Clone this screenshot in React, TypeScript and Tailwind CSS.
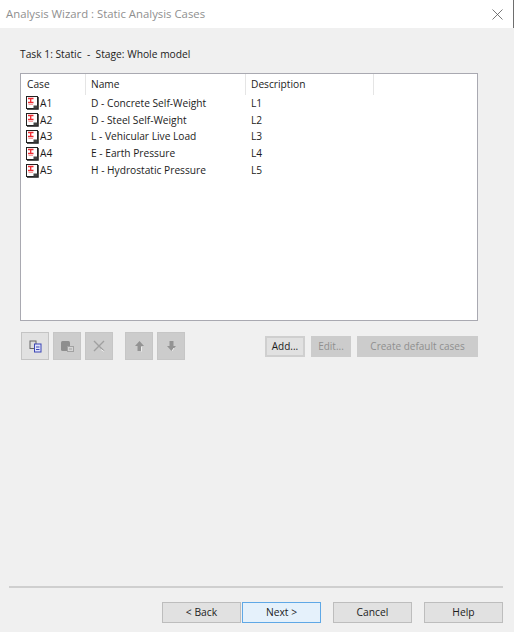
const font = { fontFamily: '"Open Sans", "Noto Sans", sans-serif' };

function CaseIcon() {
  return (
    <svg width="13" height="14" viewBox="0 0 13 14" className="shrink-0">
      <rect x="0.5" y="0.5" width="11" height="12" fill="#fff" stroke="#222" />
      <path d="M12.5 1V13.5H1" fill="none" stroke="#555" />
      <path d="M2 2.5H7.5M4.7 2.5V6.5M2 6.5H7.5" stroke="#ee2b32" strokeWidth="1.3" fill="none" />
      <path d="M2.5 8.5H7" stroke="#f4a0a0" strokeWidth="1" fill="none" />
      <rect x="7.5" y="9.5" width="4" height="3" fill="#444" />
    </svg>
  );
}

function ToolButton({ active, children }: { active?: boolean; children: React.ReactNode }) {
  return (
    <div
      className={
        active
          ? "w-7 h-7 flex items-center justify-center bg-[#e1e1e1] border border-[#c4c4c4]"
          : "w-7 h-7 flex items-center justify-center bg-[#cccccc] border border-[#c6c6c6]"
      }
    >
      {children}
    </div>
  );
}

function SmallButton({ w, active, children }: { w: string; active?: boolean; children: string }) {
  return (
    <div
      className={`${w} h-[21px] flex items-center justify-center text-[10px] ${
        active ? "bg-[#e1e1e1] border-2 border-[#cfcfcf] text-[#1c1c1c]" : "bg-[#cccccc] text-[#8f8f8f]"
      }`}
    >
      {children}
    </div>
  );
}

function WizardButton({ active, children }: { active?: boolean; children: string }) {
  return (
    <div
      className={
        active
          ? "w-[79px] h-[21px] flex items-center justify-center text-[10.3px] text-[#1c1c1c] bg-[#e5f1fb] border border-[#5fa8e6]"
          : "w-[79px] h-[21px] flex items-center justify-center text-[10.3px] text-[#1c1c1c] bg-[#e1e1e1] border border-[#bdbdbd]"
      }
    >
      {children}
    </div>
  );
}

const rows = [
  ["A1", "D - Concrete Self-Weight", "L1"],
  ["A2", "D - Steel Self-Weight", "L2"],
  ["A3", "L - Vehicular Live Load", "L3"],
  ["A4", "E - Earth Pressure", "L4"],
  ["A5", "H - Hydrostatic Pressure", "L5"],
];

export default function App() {
  return (
    <div style={font} className="w-[514px] h-[632px] flex flex-col bg-[#f0f0f0] text-[#1c1c1c] overflow-hidden">
      <div className="h-7 shrink-0 bg-white border-r border-[#6e6e6e] flex items-center justify-between pl-[6px] pr-[10px]">
        <span className="text-[11.35px] text-[#8f8f8f]">Analysis Wizard : Static Analysis Cases</span>
        <svg width="11" height="11" viewBox="0 0 11 11">
          <path d="M0.5 0.5L10.5 10.5M10.5 0.5L0.5 10.5" stroke="#555" strokeWidth="0.8" fill="none" />
        </svg>
      </div>

      <div className="flex-1 flex flex-col pl-5 pr-9">
        <div className="h-[16px] mt-[19px] flex items-center text-[10.25px] whitespace-pre">Task 1: Static  -  Stage: Whole model</div>

        <div className="h-[248px] mt-[10px] bg-white border border-[#a9a9b1] text-[10.2px]">
          <div className="h-[21px] flex items-center">
            <div className="w-[65px] h-full pl-[6px] flex items-center border-r border-[#e5e5e5]">Case</div>
            <div className="w-[160px] h-full pl-[5px] flex items-center border-r border-[#e5e5e5]">Name</div>
            <div className="w-[128px] h-full pl-[5px] flex items-center border-r border-[#e5e5e5]">Description</div>
          </div>
          <div className="flex flex-col">
            {rows.map(([c, n, d]) => (
              <div key={c} className="h-[16.8px] flex items-center">
                <div className="w-[65px] pl-[5px] flex items-center gap-[1px]">
                  <CaseIcon />
                  <span>{c}</span>
                </div>
                <div className="w-[160px] pl-[5px]">{n}</div>
                <div className="pl-[5px]">{d}</div>
              </div>
            ))}
          </div>
        </div>

        <div className="mt-[11px] pl-px flex items-center">
          <div className="flex items-center gap-[4px]">
            <ToolButton active>
              <svg width="13" height="13" viewBox="0 0 13 13">
                <rect x="1" y="1" width="6" height="7.5" fill="#dcdcdc" stroke="#666" />
                <rect x="5.5" y="4" width="6.5" height="8" fill="#dfe3fa" stroke="#3b45b5" />
                <path d="M7 7H10.5M7 9.5H10.5" stroke="#3b45b5" />
              </svg>
            </ToolButton>
            <ToolButton>
              <svg width="14" height="13" viewBox="0 0 14 13">
                <rect x="1" y="1" width="9" height="10" rx="1.5" fill="#8e8e8e" />
                <rect x="7.5" y="6.5" width="6" height="5" fill="#d4d4d4" stroke="#a2a2a2" />
                <path d="M9 9H12" stroke="#a2a2a2" />
              </svg>
            </ToolButton>
            <ToolButton>
              <svg width="12" height="12" viewBox="0 0 12 12">
                <path d="M1 1L11 11M11 1L1 11" stroke="#a0a0a0" strokeWidth="1.4" fill="none" />
                <path d="M8 9.5L11 11.5" stroke="#eeeeee" strokeWidth="1" fill="none" />
              </svg>
            </ToolButton>
          </div>
          <div className="ml-[12px] flex items-center gap-[4px]">
            <ToolButton>
              <svg width="11" height="12" viewBox="0 0 11 12">
                <path d="M5.5 1L10 6H7.5V11H3.5V6H1Z" fill="#939393" />
                <path d="M7.5 6.5V11.5" stroke="#ededed" fill="none" />
              </svg>
            </ToolButton>
            <ToolButton>
              <svg width="11" height="12" viewBox="0 0 11 12">
                <path d="M5.5 11L10 6H7.5V1H3.5V6H1Z" fill="#939393" />
                <path d="M8 8L6 11" stroke="#ededed" fill="none" />
              </svg>
            </ToolButton>
          </div>
          <div className="ml-auto flex items-center gap-[6px]">
            <SmallButton w="w-[40px]" active>Add...</SmallButton>
            <SmallButton w="w-[40px]">Edit...</SmallButton>
            <SmallButton w="w-[121px]">Create default cases</SmallButton>
          </div>
        </div>

        <div className="flex-1" />
      </div>

      <div className="mx-[9px] mr-[11px] h-[2px] bg-[#cfcfcf]" />
      <div className="h-[44px] pt-[14px] pr-[11px] flex justify-end items-start">
        <WizardButton>{"< Back"}</WizardButton>
        <div className="ml-[1px]"><WizardButton active>{"Next >"}</WizardButton></div>
        <div className="ml-[12px]"><WizardButton>Cancel</WizardButton></div>
        <div className="ml-[12px]"><WizardButton>Help</WizardButton></div>
      </div>
    </div>
  );
}
